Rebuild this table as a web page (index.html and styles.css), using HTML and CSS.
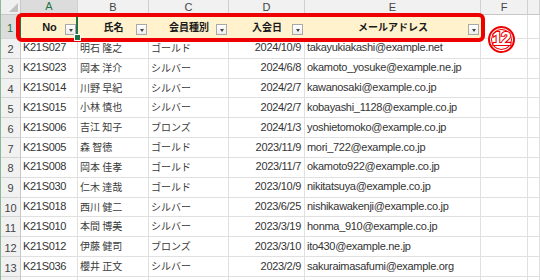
FILE: index.html
```html
<!DOCTYPE html>
<html lang="ja">
<head>
<meta charset="utf-8">
<link rel="stylesheet" href="styles.css">
</head>
<body>
<div class="wrap">
  <div class="sheet">
    <div class="corner"></div>
    <div class="ch sel-col">A</div><div class="ch">B</div><div class="ch">C</div><div class="ch">D</div><div class="ch">E</div><div class="ch">F</div><div class="ch last"></div>

    <div class="rh sel-row">1</div>
    <div class="hd a1"><span class="t">No</span><span class="fb"></span></div>
    <div class="hd"><span class="t j">氏名</span><span class="fb"></span></div>
    <div class="hd"><span class="t j">会員種別</span><span class="fb"></span></div>
    <div class="hd"><span class="t j">入会日</span><span class="fb"></span></div>
    <div class="hd"><span class="t j">メールアドレス</span><span class="fb"></span></div>
    <div class="c"></div><div class="c"></div>

    <div class="rh">2</div><div class="c">K21S027</div><div class="c j">明石 隆之</div><div class="c j">ゴールド</div><div class="c r">2024/10/9</div><div class="c">takayukiakashi@example.net</div><div class="c"></div><div class="c"></div>
    <div class="rh">3</div><div class="c">K21S023</div><div class="c j">岡本 洋介</div><div class="c j">シルバー</div><div class="c r">2024/6/8</div><div class="c">okamoto_yosuke@example.ne.jp</div><div class="c"></div><div class="c"></div>
    <div class="rh">4</div><div class="c">K21S014</div><div class="c j">川野 早紀</div><div class="c j">シルバー</div><div class="c r">2024/2/7</div><div class="c">kawanosaki@example.co.jp</div><div class="c"></div><div class="c"></div>
    <div class="rh">5</div><div class="c">K21S015</div><div class="c j">小林 慎也</div><div class="c j">シルバー</div><div class="c r">2024/2/7</div><div class="c">kobayashi_1128@example.co.jp</div><div class="c"></div><div class="c"></div>
    <div class="rh">6</div><div class="c">K21S006</div><div class="c j">吉江 知子</div><div class="c j">ブロンズ</div><div class="c r">2024/1/3</div><div class="c">yoshietomoko@example.co.jp</div><div class="c"></div><div class="c"></div>
    <div class="rh">7</div><div class="c">K21S005</div><div class="c j">森 智徳</div><div class="c j">ゴールド</div><div class="c r">2023/11/9</div><div class="c">mori_722@example.co.jp</div><div class="c"></div><div class="c"></div>
    <div class="rh">8</div><div class="c">K21S008</div><div class="c j">岡本 佳孝</div><div class="c j">ゴールド</div><div class="c r">2023/11/7</div><div class="c">okamoto922@example.co.jp</div><div class="c"></div><div class="c"></div>
    <div class="rh">9</div><div class="c">K21S030</div><div class="c j">仁木 達哉</div><div class="c j">ゴールド</div><div class="c r">2023/10/9</div><div class="c">nikitatsuya@example.co.jp</div><div class="c"></div><div class="c"></div>
    <div class="rh">10</div><div class="c">K21S018</div><div class="c j">西川 健二</div><div class="c j">シルバー</div><div class="c r">2023/6/25</div><div class="c">nishikawakenji@example.co.jp</div><div class="c"></div><div class="c"></div>
    <div class="rh">11</div><div class="c">K21S010</div><div class="c j">本間 博美</div><div class="c j">シルバー</div><div class="c r">2023/3/19</div><div class="c">honma_910@example.co.jp</div><div class="c"></div><div class="c"></div>
    <div class="rh">12</div><div class="c">K21S012</div><div class="c j">伊藤 健司</div><div class="c j">ブロンズ</div><div class="c r">2023/3/10</div><div class="c">ito430@example.ne.jp</div><div class="c"></div><div class="c"></div>
    <div class="rh">13</div><div class="c">K21S036</div><div class="c j">櫻井 正文</div><div class="c j">シルバー</div><div class="c r">2023/2/9</div><div class="c">sakuraimasafumi@example.org</div><div class="c"></div><div class="c"></div>
    <div class="rh"></div><div class="c"></div><div class="c"></div><div class="c"></div><div class="c"></div><div class="c"></div><div class="c"></div><div class="c"></div>
  </div>
  <div class="redbox"></div>
  <div class="badge">12</div>
</div>
</body>
</html>
```
FILE: styles.css
```css
html, body {
  margin: 0;
  padding: 0;
  background: #ffffff;
  overflow: hidden;
}
.wrap {
  position: relative;
  width: 540px;
  height: 280px;
  overflow: hidden;
  font-family: "Liberation Sans", "Noto Sans CJK JP", sans-serif;
  color: #333333;
}
.sheet {
  display: grid;
  grid-template-columns: 20px 57px 71px 80px 76px 176px 47px 1fr;
  grid-template-rows: 15px 24px repeat(13, 19.83px);
  border-left: 1px solid #8cb89a;
  box-sizing: border-box;
  width: 540px;
}
.corner {
  background: #f0f0f0;
  border-right: 1px solid #c8c8c8;
  border-bottom: 1px solid #c8c8c8;
  box-sizing: border-box;
  position: relative;
}
.corner::after {
  content: "";
  position: absolute;
  right: 2px;
  bottom: 2px;
  width: 0;
  height: 0;
  border-left: 9px solid transparent;
  border-bottom: 9px solid #c1c1c1;
}
.ch {
  background: #f1f1f1;
  border-right: 1px solid #d0d0d0;
  border-bottom: 1px solid #c8c8c8;
  box-sizing: border-box;
  font-family: "Liberation Sans", sans-serif;
  font-size: 11px;
  line-height: 14px;
  color: #444;
  text-align: center;
}
.ch.sel-col {
  background: #dcdcdc;
  color: #217346;
  border-bottom: 2px solid #217346;
  line-height: 13px;
}
.rh {
  background: #f1f1f1;
  border-right: 1px solid #c8c8c8;
  border-bottom: 1px solid #d4d4d4;
  box-sizing: border-box;
  font-family: "Liberation Sans", sans-serif;
  font-size: 11px;
  color: #444;
  display: flex;
  align-items: center;
  justify-content: center;
  padding-top: 2px;
}
.rh.sel-row {
  background: #dcdcdc;
  color: #217346;
  border-right: 2px solid #217346;
}
.hd {
  background: #fff2cc;
  border-bottom: 1px solid #d9d9d9;
  box-sizing: border-box;
  display: grid;
  grid-template-columns: 13px 1fr 13px;
  align-items: center;
  font-weight: bold;
  font-size: 11px;
  color: #1a1a1a;
}
.hd .t {
  grid-column: 2;
  text-align: center;
  white-space: nowrap;
}
.hd .t.j {
  font-family: "Noto Sans CJK JP", sans-serif;
  font-size: 10px;
}
.hd .fb {
  grid-column: 3;
  align-self: end;
  margin-bottom: 3px;
  width: 11px;
  height: 11px;
  box-sizing: border-box;
  border: 1px solid #a9a9a9;
  background: linear-gradient(#ffffff, #ececec);
  display: flex;
  align-items: center;
  justify-content: center;
}
.hd .fb::after {
  content: "";
  width: 0;
  height: 0;
  border-left: 2.5px solid transparent;
  border-right: 2.5px solid transparent;
  border-top: 3px solid #444;
  margin-top: 1px;
}
.hd.a1 {
  box-shadow: inset -2px 0 0 #217346;
  position: relative;
}
.hd.a1::after {
  content: "";
  position: absolute;
  right: -3px;
  bottom: -3px;
  width: 5px;
  height: 5px;
  background: #217346;
  border: 1px solid #fff;
  z-index: 2;
}
.c {
  border-right: 1px solid #e0e0e0;
  border-bottom: 1px solid #e0e0e0;
  box-sizing: border-box;
  font-size: 11px;
  letter-spacing: -0.3px;
  display: flex;
  align-items: center;
  padding-left: 2px;
  padding-bottom: 2px;
  white-space: nowrap;
  overflow: visible;
}
.c.j {
  font-family: "Noto Sans CJK JP", sans-serif;
  font-size: 10px;
  letter-spacing: 0;
  color: #3a3a3a;
}
.c.r {
  justify-content: flex-end;
  padding-right: 3px;
}
.redbox {
  position: absolute;
  left: 16px;
  top: 13px;
  width: 469px;
  height: 29px;
  box-sizing: border-box;
  border: 4px solid #ee0000;
  border-radius: 6px;
}
.badge {
  position: absolute;
  left: 488px;
  top: 26px;
  width: 27px;
  height: 27px;
  box-sizing: border-box;
  border: 2px solid #ee0000;
  border-radius: 50%;
  box-shadow: inset 0 0 0 1px #ffffff, inset 0 0 0 2px #ee0000;
  background: #fff;
  color: #ffffff;
  -webkit-text-stroke: 2.2px #ee0000;
  paint-order: stroke fill;
  font-family: "Liberation Sans", sans-serif;
  font-weight: bold;
  font-size: 18px;
  line-height: 23px;
  text-align: center;
  letter-spacing: -1.5px;
  text-indent: -1px;
}
```
